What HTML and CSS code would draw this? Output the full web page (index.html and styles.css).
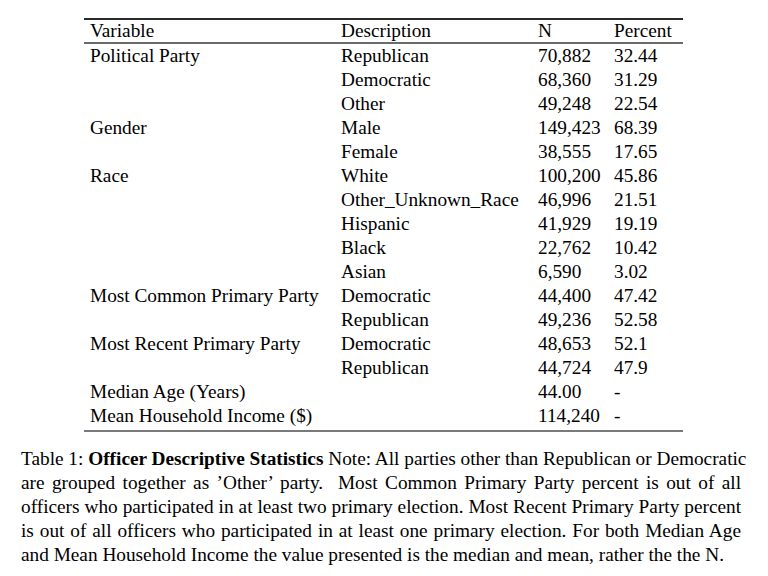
FILE: index.html
```html
<!DOCTYPE html>
<html>
<head>
<meta charset="utf-8">
<link rel="stylesheet" href="styles.css">
</head>
<body>
<div class="page">
  <table class="stats">
    <colgroup>
      <col class="c1"><col class="c2"><col class="c3"><col class="c4">
    </colgroup>
    <thead>
      <tr><th>Variable</th><th>Description</th><th>N</th><th>Percent</th></tr>
    </thead>
    <tbody>
      <tr><td>Political Party</td><td>Republican</td><td>70,882</td><td>32.44</td></tr>
      <tr><td></td><td>Democratic</td><td>68,360</td><td>31.29</td></tr>
      <tr><td></td><td>Other</td><td>49,248</td><td>22.54</td></tr>
      <tr><td>Gender</td><td>Male</td><td>149,423</td><td>68.39</td></tr>
      <tr><td></td><td>Female</td><td>38,555</td><td>17.65</td></tr>
      <tr><td>Race</td><td>White</td><td>100,200</td><td>45.86</td></tr>
      <tr><td></td><td>Other_Unknown_Race</td><td>46,996</td><td>21.51</td></tr>
      <tr><td></td><td>Hispanic</td><td>41,929</td><td>19.19</td></tr>
      <tr><td></td><td>Black</td><td>22,762</td><td>10.42</td></tr>
      <tr><td></td><td>Asian</td><td>6,590</td><td>3.02</td></tr>
      <tr><td>Most Common Primary Party</td><td>Democratic</td><td>44,400</td><td>47.42</td></tr>
      <tr><td></td><td>Republican</td><td>49,236</td><td>52.58</td></tr>
      <tr><td>Most Recent Primary Party</td><td>Democratic</td><td>48,653</td><td>52.1</td></tr>
      <tr><td></td><td>Republican</td><td>44,724</td><td>47.9</td></tr>
      <tr><td>Median Age (Years)</td><td></td><td>44.00</td><td>-</td></tr>
      <tr class="lastrow"><td>Mean Household Income ($)</td><td></td><td>114,240</td><td>-</td></tr>
    </tbody>
  </table>
  <p class="caption">
    <span class="line">Table 1: <b>Officer Descriptive Statistics</b> Note: All parties other than Republican or Democratic</span>
    <span class="line">are grouped together as ’Other’ party.&nbsp; Most Common Primary Party percent is out of all</span>
    <span class="line">officers who participated in at least two primary election. Most Recent Primary Party percent</span>
    <span class="line">is out of all officers who participated in at least one primary election. For both Median Age</span>
    <span class="line last">and Mean Household Income the value presented is the median and mean, rather the the N.</span>
  </p>
</div>
</body>
</html>
```
FILE: styles.css
```css
html, body {
  margin: 0;
  padding: 0;
  background: #fff;
}
body {
  font-family: "Liberation Serif", "DejaVu Serif", serif;
  color: #000;
}
.page {
  width: 720px;
  padding: 18px 0 0 21px;
}
.stats {
  margin-left: 63px;
  width: 599px;
  border-collapse: collapse;
  table-layout: fixed;
  font-size: 19.3px;
  border-top: 2px solid #2a2a2a;
  border-bottom: 2px solid #7a7a7a;
}
.c1 { width: 251px; }
.c2 { width: 197px; }
.c3 { width: 76px; }
.c4 { width: 75px; }
.stats th, .stats td {
  text-align: left;
  font-weight: normal;
  padding: 0 0 0 6px;
  height: 24px;
  line-height: 24px;
  white-space: nowrap;
  vertical-align: middle;
}
.stats thead th {
  border-bottom: 2px solid #6a6a6a;
  height: 22px;
  line-height: 22px;
}
.stats .lastrow td {
  padding-bottom: 2px;
}
.caption {
  margin: 15px 0 0 0;
  font-size: 19.3px;
  line-height: 24px;
}
.caption .line {
  display: block;
  text-align: justify;
  text-align-last: justify;
  white-space: nowrap;
}
.caption .line.last {
  text-align-last: left;
}
.caption b {
  font-weight: bold;
}
```
